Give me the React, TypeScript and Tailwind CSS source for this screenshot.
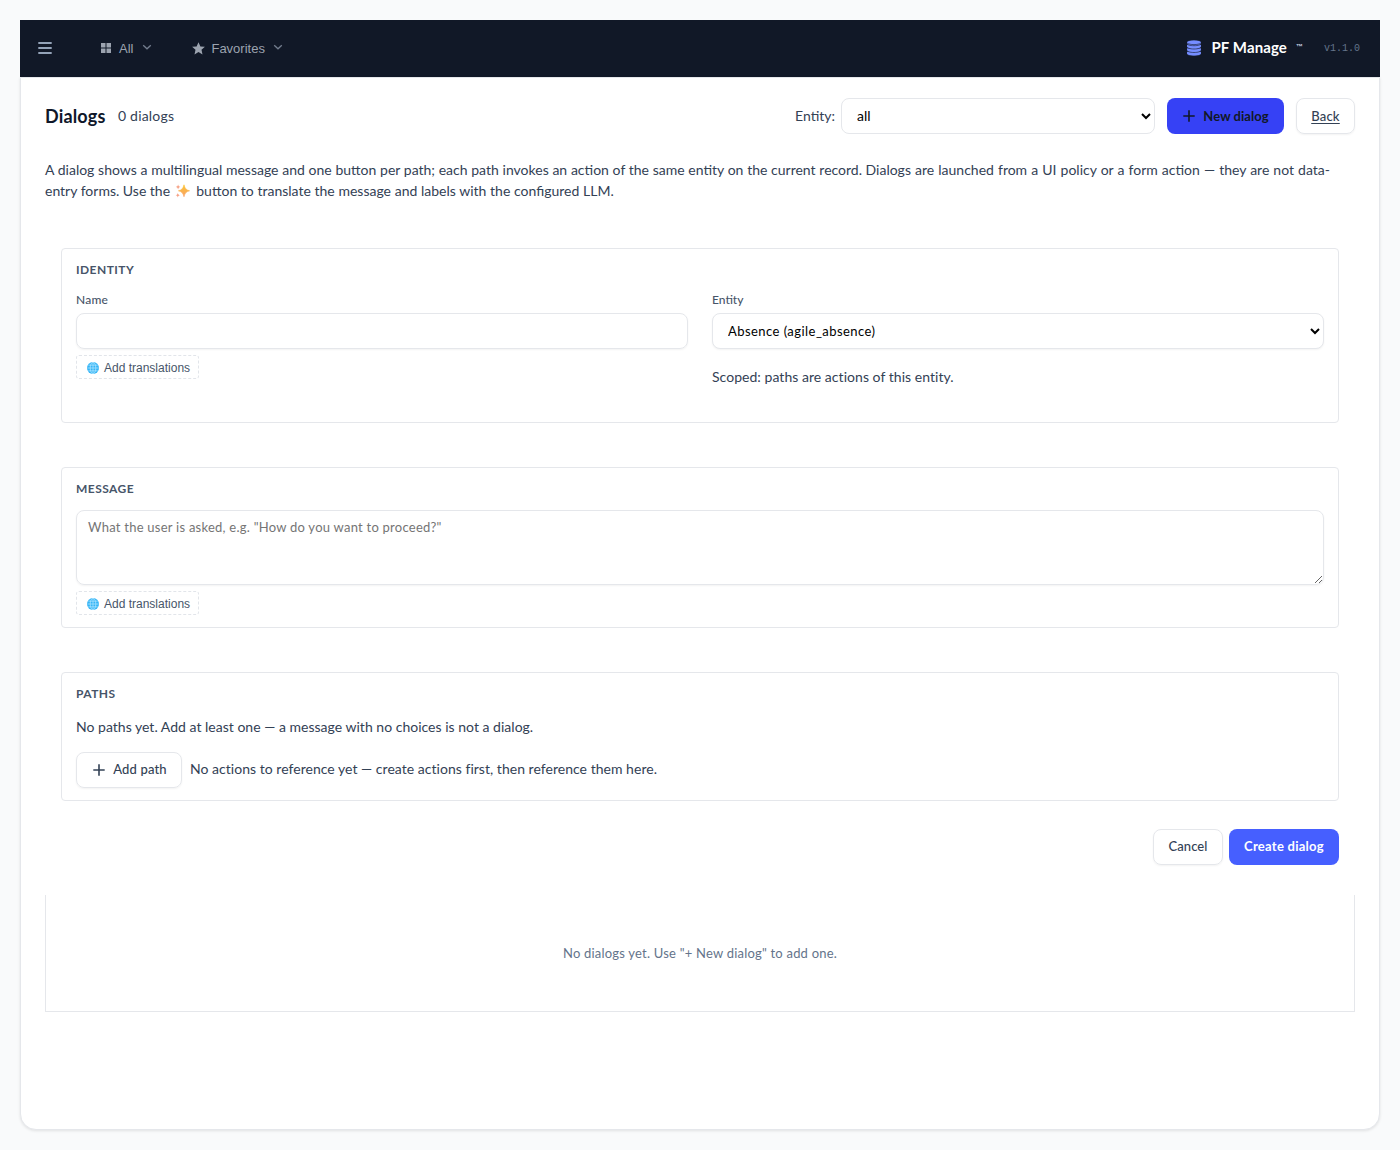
import type { ReactNode } from "react";

const Chevron = () => (
  <svg className="w-2.5 h-2.5 -mt-[2px]" viewBox="0 0 10 10" fill="none">
    <path d="M1.2 3.2 5 6.8 8.8 3.2" stroke="#727c8d" strokeWidth="1.3" />
  </svg>
);

const Plus = () => (
  <svg className="w-3 h-3" viewBox="0 0 12 12" fill="none">
    <path d="M6 .3v11.4M.3 6h11.4" stroke="currentColor" strokeWidth="1.6" />
  </svg>
);

const Globe = () => (
  <svg className="w-3 h-3" viewBox="0 0 12 12" fill="none">
    <circle cx="6" cy="6" r="6" fill="#35b5f6" />
    <g stroke="#b5e6ff" strokeWidth="0.7">
      <ellipse cx="6" cy="6" rx="2.8" ry="5.7" />
      <path d="M6 .3v11.4M.3 6h11.4M1.3 3.2h9.4M1.3 8.8h9.4" />
    </g>
  </svg>
);

const Sparkles = () => (
  <svg
    className="inline-block w-[15px] h-[14px] ml-[1px] mr-[3px] -mt-[2px]"
    viewBox="0 0 15 14"
  >
    <defs>
      <linearGradient id="spark" x1="0" y1="0" x2="0" y2="1">
        <stop offset="0" stopColor="#fcc531" />
        <stop offset="1" stopColor="#f8a06a" />
      </linearGradient>
    </defs>
    <path
      d="M9 .8c1 3.600 1.900 5 5.600 6-3.700 1-4.600 2.400-5.600 6-1-3.600-1.900-5-5.600-6 3.700-1 4.600-2.400 5.600-6z"
      fill="url(#spark)"
      stroke="url(#spark)"
      strokeWidth="0.6"
    />
    <path
      d="M3.100.6c.4 1.600.8 2 2.300 2.400-1.500.4-1.900.8-2.300 2.400C2.700 3.800 2.300 3.400.8 3 2.300 2.600 2.700 2.200 3.100.6zM2.800 8.900c.4 1.500.8 1.900 2.200 2.300-1.400.4-1.800.8-2.200 2.300-.4-1.500-.8-1.900-2.200-2.300 1.400-.4 1.800-.8 2.200-2.300z"
      fill="#f6a184"
    />
  </svg>
);

const Database = () => (
  <svg className="w-[14px] h-4" viewBox="0 0 14 16">
    <g fill="#758dff" stroke="#111827" strokeWidth="0.6">
      <path d="M-.4 11.500v1.900c0 1.600 3.300 2.600 7.400 2.600s7.400-1 7.400-2.600v-1.900z" />
      <path d="M-.4 8v1.800c0 1.600 3.300 2.700 7.400 2.700s7.400-1.100 7.400-2.700V8z" />
      <path d="M-.4 4.500v1.800C-.4 7.900 2.900 9 7 9s7.400-1.100 7.400-2.700V4.500z" />
      <path d="M-.4 2.500v.7c0 1.600 3.300 2.500 7.400 2.500s7.400-.9 7.400-2.500v-.7z" />
      <ellipse cx="7" cy="2.300" rx="7.400" ry="2.300" />
    </g>
  </svg>
);

const Section = ({
  title,
  className,
  children,
}: {
  title: string;
  className: string;
  children: ReactNode;
}) => (
  <section
    className={`mx-4 border border-[#e5e7eb] rounded-[4px] px-[14px] ${className}`}
  >
    <h3 className="pt-3 text-[12px] leading-[18px] font-bold tracking-[0.45px] text-[#475569]">
      {title}
    </h3>
    {children}
  </section>
);

const AddTranslations = () => (
  <button className="mt-1.5 h-6 w-[123px] flex items-center gap-[5px] pt-px pl-[10px] border border-dashed border-[#e2e5ea] rounded-[3px] font-['Liberation_Sans',sans-serif] text-[12px] text-[#475569] whitespace-nowrap">
    <Globe />
    Add translations
  </button>
);

const App = () => {
  return (
    <div className="h-[1150px] bg-[#f9fafb] p-5 font-[Lato,sans-serif] text-[14px] text-[#334155]">
      <div className="h-full flex flex-col">
        <header className="h-[57px] pb-px shrink-0 bg-[#111827] text-[#9ca3af] flex items-center pl-[18px] pr-5 font-['Liberation_Sans',sans-serif] text-[13px]">
          <svg className="w-[14px] h-3" viewBox="0 0 14 12">
            <path d="M.3 1h13.400M.3 6h13.400M.3 11h13.400" stroke="#94a3b8" strokeWidth="2" />
          </svg>
          <div className="ml-[49px] flex items-center">
            <svg className="w-[10px] h-[10px]" viewBox="0 0 10 10" fill="#9ca3af">
              <path d="M0 0h4.500v4.500H0zM5.500 0H10v4.500H5.500zM0 5.500h4.500V10H0zM5.500 5.500H10V10H5.500z" />
            </svg>
            <span className="ml-2 mr-[9px] pt-px">All</span>
            <Chevron />
          </div>
          <div className="ml-10 flex items-center">
            <svg className="w-[13px] h-[13px]" viewBox="0 0 13 13" fill="#9ca3af">
              <path d="m6.500.2 1.900 4.200 4.500.4-3.400 3 1 4.600-4-2.400-4 2.400 1-4.600-3.400-3 4.500-.4z" />
            </svg>
            <span className="ml-1.5 mr-2 pt-px">Favorites</span>
            <Chevron />
          </div>
          <div className="ml-auto flex items-center">
            <Database />
            <span className="ml-[10px] pb-[2px] font-[Lato,sans-serif] font-bold text-[15px] tracking-[0.12px] text-white">
              PF Manage
            </span>
            <span className="ml-[9px] -mt-px w-[7px] text-[7px] font-bold text-[#cbd5e1]">™</span>
            <span className="ml-[21px] font-['Liberation_Mono',monospace] text-[10px] text-[#64748b]">
              v1.1.0
            </span>
          </div>
        </header>

        <main className="flex-1 bg-white border border-[#e5e7eb] rounded-b-[16px] shadow-[0_1px_3px_rgba(0,0,0,0.1)] px-6 pt-5">
          <div className="flex items-center h-9">
            <h1 className="pt-px text-[18px] font-bold tracking-[0.15px] text-[#0f172a] w-[60px] whitespace-nowrap">
              Dialogs
            </h1>
            <span className="ml-[13px] pb-px tracking-[0.2px]">0 dialogs</span>
            <span className="ml-auto mr-1.5 pb-px">Entity:</span>
            <select className="w-[314px] h-9 border border-[#e5e7eb] rounded-[8px] bg-white pl-[11px] pb-px text-[14px] text-black">
              <option>all</option>
            </select>
            <button className="ml-3 w-[117px] h-9 rounded-[8px] bg-[#3641f5] text-[#111827] font-bold text-[13px] flex items-center justify-center gap-2 pl-px">
              <Plus />
              <span className="pt-px tracking-[0.05px]">New dialog</span>
            </button>
            <button className="ml-3 w-[59px] h-9 rounded-[8px] border border-[#e5e7eb] shadow-[0_1px_2px_rgba(0,0,0,0.05)] pt-px text-[13px] tracking-[0.2px] font-medium underline underline-offset-2">
              Back
            </button>
          </div>

          <p className="mt-[25px] leading-[21px] whitespace-nowrap">
            <span className="[word-spacing:0.13px]">
              A dialog shows a multilingual message and one button per path;
              each path invokes an action of the same entity on the current
              record.
            </span>{" "}
            <span className="[word-spacing:0.500px]">
              Dialogs are launched from a UI policy or a form action — they are
              not data-
            </span>
            <br />
            entry forms. Use the <Sparkles />{" "}
            <span className="[word-spacing:0.1px]">
              button to translate the message and labels with the configured
              LLM.
            </span>
          </p>

          <Section title="IDENTITY" className="mt-[47px] h-[175px]">
            <div className="mt-3 grid grid-cols-2 gap-6">
              <div>
                <label className="block text-[12px] leading-[18px] font-medium tracking-[0.2px] text-[#475569]">
                  Name
                </label>
                <input className="block mt-1 w-full h-9 border border-[#e5e7eb] rounded-[8px] shadow-[0_1px_2px_rgba(0,0,0,0.05)]" />
                <AddTranslations />
              </div>
              <div>
                <label className="block text-[12px] leading-[18px] font-medium text-[#475569]">
                  Entity
                </label>
                <select className="block mt-1 w-full h-9 border border-[#e5e7eb] rounded-[8px] bg-white pl-[11px] text-[13px] tracking-[0.45px] text-black shadow-[0_1px_2px_rgba(0,0,0,0.05)]">
                  <option>Absence (agile_absence)</option>
                </select>
                <p className="mt-[17px] leading-[21px] tracking-[0.04px]">
                  Scoped: paths are actions of this entity.
                </p>
              </div>
            </div>
          </Section>

          <Section title="MESSAGE" className="mt-11 h-[161px]">
            <textarea
              className="block mt-3 w-full h-[75px] border border-[#e5e7eb] rounded-[8px] px-[11px] py-[7px] text-[13px] leading-[19px] tracking-[0.245px] placeholder:text-[#757575] shadow-[0_1px_2px_rgba(0,0,0,0.05)]"
              placeholder={'What the user is asked, e.g. "How do you want to proceed?"'}
            />
            <AddTranslations />
          </Section>

          <Section title="PATHS" className="mt-11 h-[129px]">
            <p className="mt-[13px] leading-[21px] tracking-[0.015px]">
              No paths yet. Add at least one — a message with no choices is not
              a dialog.
            </p>
            <div className="mt-[15px] flex items-center gap-2">
              <button className="w-[106px] h-9 rounded-[8px] border border-[#e5e7eb] shadow-[0_1px_2px_rgba(0,0,0,0.05)] text-[13px] tracking-[0.15px] font-medium flex items-center justify-center gap-2 pl-[2px]">
                <Plus />
                Add path
              </button>
              <span className="pb-[3px] tracking-[0.03px]">
                No actions to reference yet — create actions first, then
                reference them here.
              </span>
            </div>
          </Section>

          <div className="mt-7 mx-4 flex justify-end gap-1.5">
            <button className="w-[70px] h-9 rounded-[8px] border border-[#e5e7eb] shadow-[0_1px_2px_rgba(0,0,0,0.05)] text-[13px] tracking-[0.1px] font-medium">
              Cancel
            </button>
            <button className="w-[110px] h-9 rounded-[8px] bg-[#465fff] text-white text-[13px] tracking-[0.27px] font-bold">
              Create dialog
            </button>
          </div>

          <div className="mt-[30px] h-[117px] border border-t-0 border-[#e5e7eb] flex items-center justify-center pt-[2px] text-[13px] tracking-[0.21px] text-[#64748b]">
            No dialogs yet. Use "+ New dialog" to add one.
          </div>
        </main>
      </div>
    </div>
  );
};

export default App;
